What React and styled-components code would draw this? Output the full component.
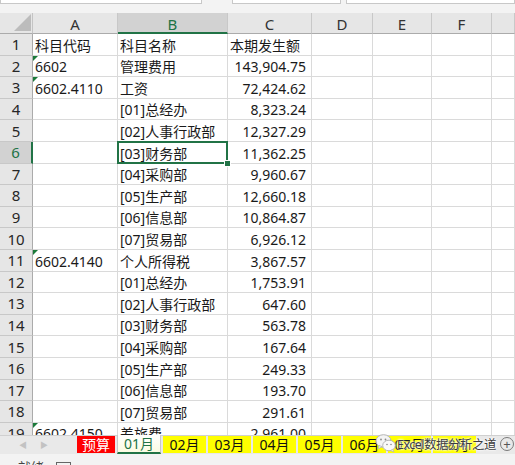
import styled, { createGlobalStyle, css } from "styled-components";

const GlobalStyle = createGlobalStyle`
  html, body {
    margin: 0;
    padding: 0;
    height: 100%;
    overflow: hidden;
    background: #fff;
    font-family: "Noto Sans", "Noto Sans CJK SC", sans-serif;
  }
`;

const GREEN = "#217346";

const columns = ["A", "B", "C", "D", "E", "F", ""];

const rows = [
  ["科目代码", "科目名称", "本期发生额"],
  ["6602", "管理费用", "143,904.75", true],
  ["6602.4110", "工资", "72,424.62", true],
  ["", "[01]总经办", "8,323.24"],
  ["", "[02]人事行政部", "12,327.29"],
  ["", "[03]财务部", "11,362.25"],
  ["", "[04]采购部", "9,960.67"],
  ["", "[05]生产部", "12,660.18"],
  ["", "[06]信息部", "10,864.87"],
  ["", "[07]贸易部", "6,926.12"],
  ["6602.4140", "个人所得税", "3,867.57", true],
  ["", "[01]总经办", "1,753.91"],
  ["", "[02]人事行政部", "647.60"],
  ["", "[03]财务部", "563.78"],
  ["", "[04]采购部", "167.64"],
  ["", "[05]生产部", "249.33"],
  ["", "[06]信息部", "193.70"],
  ["", "[07]贸易部", "291.61"],
  ["6602.4150", "差旅费", "2,961.00", true],
];

const tabs = ["02月", "03月", "04月", "05月", "06月", "07月", "08月"];

const SELECTED_ROW = 6;

const Page = styled.div`
  display: flex;
  flex-direction: column;
  height: 100vh;
`;

const TopStrip = styled.div`
  height: 13px;
  flex: none;
  background: #f3f3f3;
  display: flex;
  align-items: flex-start;
  gap: 5px;
`;

const FieldBox = styled.div`
  height: 3px;
  background: #fff;
  border: 1px solid #c8c8c8;
  border-top: none;
  width: ${(p) => p.$w}px;
  margin-left: ${(p) => p.$ml || 0}px;
  flex: ${(p) => (p.$grow ? 1 : "none")};
`;

const Sheet = styled.div`
  flex: none;
  height: 422px;
  overflow: hidden;
  display: grid;
  grid-template-columns: 33px 85px 110px 84px 61px 59px 60px 1fr;
  grid-template-rows: 21px;
  grid-auto-rows: 21.6px;
  font-size: 14px;
  color: #1a1a1a;
`;

const Corner = styled.div`
  background: #e6e6e6;
  border-right: 1px solid #c4c4c4;
  border-bottom: 1px solid #ababab;
  box-sizing: border-box;
  display: flex;
  align-items: flex-end;
  justify-content: flex-end;
  padding: 0 1px 2px 0;

  &::after {
    content: "";
    width: 0;
    height: 0;
    border-left: 17px solid transparent;
    border-bottom: 17px solid #bcbcbc;
  }
`;

const ColHead = styled.div`
  box-sizing: border-box;
  background: ${(p) => (p.$active ? "#d2d2d2" : "#e6e6e6")};
  color: ${(p) => (p.$active ? GREEN : "#333")};
  border-right: 1px solid #c8c8c8;
  border-bottom: ${(p) => (p.$active ? `2px solid ${GREEN}` : "1px solid #ababab")};
  display: flex;
  align-items: center;
  justify-content: center;
  font-size: 15px;
  padding-top: 2px;
`;

const RowHead = styled.div`
  box-sizing: border-box;
  background: ${(p) => (p.$active ? "#d2d2d2" : "#e6e6e6")};
  color: ${(p) => (p.$active ? GREEN : "#262626")};
  border-right: ${(p) => (p.$active ? `2px solid ${GREEN}` : "1px solid #ababab")};
  border-bottom: 1px solid #c8c8c8;
  display: flex;
  align-items: center;
  justify-content: center;
  font-size: 15px;
`;

const Cell = styled.div`
  position: relative;
  box-sizing: border-box;
  border-right: 1px solid #dadada;
  border-bottom: 1px solid #dadada;
  display: flex;
  align-items: flex-end;
  justify-content: ${(p) => (p.$right ? "flex-end" : "flex-start")};
  padding: 0 ${(p) => (p.$right ? 5 : 0)}px 0 ${(p) => (p.$right ? 0 : 2)}px;
  line-height: 18px;
  white-space: nowrap;

  ${(p) =>
    p.$flag &&
    css`
      &::before {
        content: "";
        position: absolute;
        top: 0;
        left: 0;
        border-top: 5px solid #1b7a3a;
        border-right: 5px solid transparent;
      }
    `}

  ${(p) =>
    p.$selected &&
    css`
      &::after {
        content: "";
        position: absolute;
        inset: -1px -1px -1px -1px;
        border: 2px solid ${GREEN};
        z-index: 2;
      }
      &::before {
        content: "";
        position: absolute;
        right: -4px;
        bottom: -4px;
        width: 5px;
        height: 5px;
        background: ${GREEN};
        border: 1px solid #fff;
        z-index: 3;
      }
    `}
`;

const TabBar = styled.div`
  position: relative;
  flex: none;
  height: 19px;
  background: #e9e9e9;
  border-top: 1px solid #d0d0d0;
  box-sizing: border-box;
  display: flex;
  align-items: flex-start;
  gap: 2px;
  font-size: 14px;
`;

const Nav = styled.div`
  width: 75px;
  display: flex;
  align-items: center;
  height: 17px;
  gap: 13px;
  padding-left: 19px;
  box-sizing: border-box;
  color: #c2c2c2;
  font-size: 8px;
`;

const Tab = styled.div`
  height: 17px;
  width: ${(p) => p.$w}px;
  display: flex;
  align-items: center;
  justify-content: center;
  box-sizing: border-box;
  line-height: 17px;
  background: ${(p) => p.$bg};
  color: ${(p) => p.$color || "#111"};
  flex: none;

  ${(p) =>
    p.$active &&
    css`
      height: 19px;
      margin-top: -1px;
      background: linear-gradient(#ffffff, #fbfbe2);
      border-bottom: 2px solid ${GREEN};
      border-left: 1px solid #c8c8c8;
      border-right: 1px solid #c8c8c8;
    `}
`;

const AddButton = styled.div`
  margin-left: auto;
  margin-right: 1px;
  margin-top: 1px;
  width: 14px;
  height: 14px;
  border: 1px solid #7a7a7a;
  border-radius: 50%;
  box-sizing: border-box;
  color: #555;
  display: flex;
  align-items: center;
  justify-content: center;
  font-size: 13px;
  line-height: 1;
`;

const Watermark = styled.div`
  position: absolute;
  left: 375px;
  top: -3px;
  display: flex;
  align-items: center;
  gap: 0;
  white-space: nowrap;
  pointer-events: none;
`;

const WatermarkText = styled.span`
  color: #3c3c3c;
  font-size: 12.5px;
  letter-spacing: -0.5px;
  text-shadow: 0 0 2px #fff, 0 0 2px #fff, 0 0 3px #fff;
`;

const StatusBar = styled.div`
  flex: none;
  height: 22px;
  background: #f3f3f3;
  display: flex;
  align-items: flex-start;
  gap: 12px;
  padding: 3px 0 0 18px;
  font-size: 13px;
  color: #444;
  line-height: 20px;
`;

const StatusIcon = styled.svg`
  margin-top: 5px;
`;

function WeChatIcon() {
  return (
    <svg width="22" height="20" viewBox="0 0 22 20">
      <ellipse cx="8.5" cy="8" rx="7.5" ry="6.3" fill="#f4f4f4" stroke="#b5b5b5" strokeWidth="1" />
      <path d="M4 12.5 L3 16 L7 13.6 Z" fill="#f4f4f4" stroke="#b5b5b5" strokeWidth="0.8" />
      <ellipse cx="14" cy="12.5" rx="6.3" ry="5.3" fill="#fafafa" stroke="#b5b5b5" strokeWidth="1" />
      <path d="M17.5 16.3 L19 19 L15.6 17.5 Z" fill="#fafafa" stroke="#b5b5b5" strokeWidth="0.8" />
      <circle cx="6" cy="6.5" r="0.9" fill="#8a8a8a" />
      <circle cx="10.5" cy="6.5" r="0.9" fill="#8a8a8a" />
      <circle cx="12" cy="11.5" r="0.8" fill="#8a8a8a" />
      <circle cx="16" cy="11.5" r="0.8" fill="#8a8a8a" />
    </svg>
  );
}

const App = () => {
  return (
    <Page>
      <GlobalStyle />
      <TopStrip>
        <FieldBox $w={200} />
        <FieldBox $w={107} $ml={25} />
        <FieldBox $grow />
      </TopStrip>

      <Sheet>
        <Corner />
        {columns.map((c, i) => (
          <ColHead key={i} $active={c === "B"}>
            {c}
          </ColHead>
        ))}
        {rows.map((r, i) => {
          const n = i + 1;
          return [
            <RowHead key={`h${n}`} $active={n === SELECTED_ROW}>
              {n}
            </RowHead>,
            <Cell key={`a${n}`} $flag={r[3]}>
              {r[0]}
            </Cell>,
            <Cell key={`b${n}`} $selected={n === SELECTED_ROW}>
              {r[1]}
            </Cell>,
            <Cell key={`c${n}`} $right={n > 1}>
              {r[2]}
            </Cell>,
            <Cell key={`d${n}`} />,
            <Cell key={`e${n}`} />,
            <Cell key={`f${n}`} />,
            <Cell key={`g${n}`} />,
          ];
        })}
      </Sheet>

      <TabBar>
        <Nav>
          <span>◀</span>
          <span>▶</span>
        </Nav>
        <Tab $w={38} $bg="#ff0000" $color="#fff">
          预算
        </Tab>
        <Tab $w={44} $active $color={GREEN}>
          01月
        </Tab>
        {tabs.map((t) => (
          <Tab key={t} $w={43} $bg="#ffff00">
            {t}
          </Tab>
        ))}
        <AddButton>+</AddButton>
        <Watermark>
          <WeChatIcon />
          <WatermarkText>Excel数据分析之道</WatermarkText>
        </Watermark>
      </TabBar>

      <StatusBar>
        <span>就绪</span>
        <StatusIcon width="15" height="12" viewBox="0 0 15 12">
          <rect x="0.5" y="0.5" width="14" height="11" fill="none" stroke="#666" />
          <line x1="0.5" y1="3.5" x2="14.5" y2="3.5" stroke="#666" />
          <rect x="3" y="6" width="9" height="3" fill="#888" />
        </StatusIcon>
      </StatusBar>
    </Page>
  );
};

export default App;
